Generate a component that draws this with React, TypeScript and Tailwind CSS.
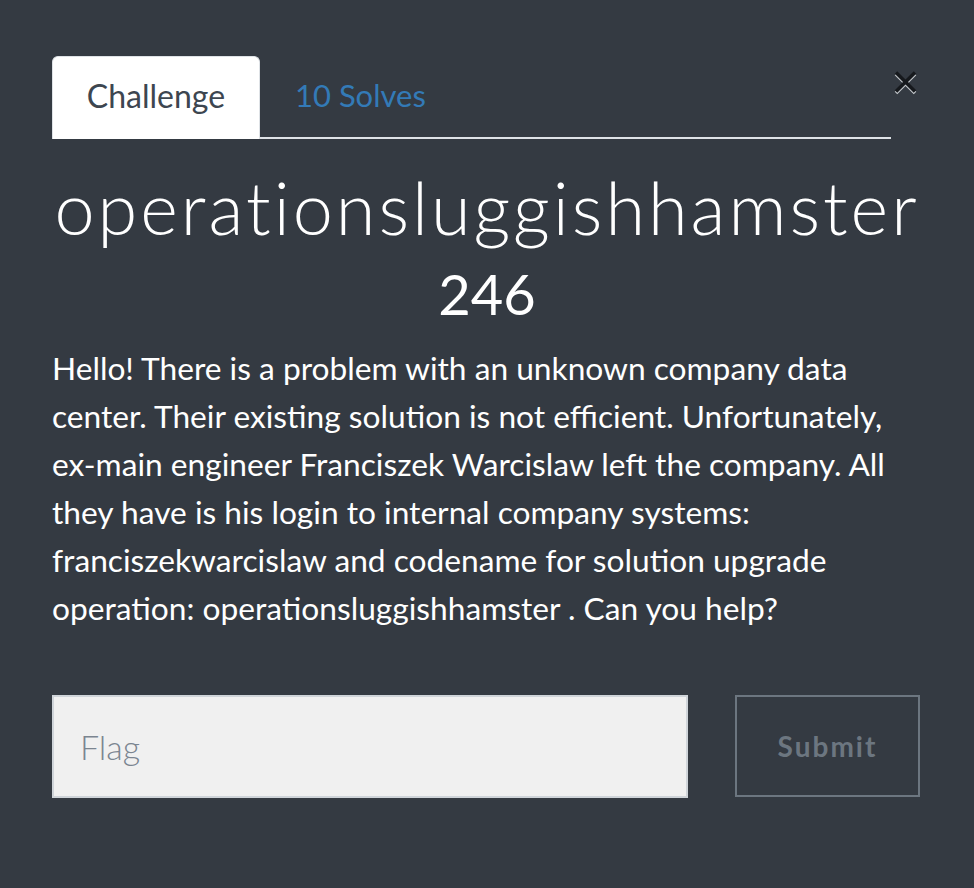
import { useState } from "react"

export default function App() {
  const [flag, setFlag] = useState("")

  return (
    <div className="min-h-[888px] w-full bg-[#343a42] font-['Lato','Open_Sans',sans-serif] text-white">
      <div className="relative px-[52px] pt-[54px]">
        <button className="absolute left-[893px] top-[70px] w-[25px] h-[25px]">
          <svg viewBox="0 0 25 25" width="25" height="25">
            <g strokeWidth="3.5" strokeLinecap="butt">
              <line x1="3" y1="4" x2="22" y2="23" stroke="#c8ccd0" />
              <line x1="22" y1="4" x2="3" y2="23" stroke="#c8ccd0" />
              <line x1="3" y1="2.5" x2="22" y2="21.5" stroke="#16191d" />
              <line x1="22" y1="2.5" x2="3" y2="21.5" stroke="#16191d" />
            </g>
          </svg>
        </button>

        <div className="flex items-end w-[839px] border-b-2 border-[#dee2e6]">
          <div className="h-[83px] w-[208px] -mb-[2px] flex items-center justify-center rounded-t-[6px] bg-white border border-[#dee2e6] border-b-0 text-[32px] text-[#3d4650] pb-[4px]">
            Challenge
          </div>
          <a href="#" className="h-[83px] px-[35px] flex items-center text-[31px] text-[#337ab7]">
            10 Solves
          </a>
        </div>

        <h1 className="mt-[20px] text-[72px] leading-[96px] font-light tracking-[3px] text-center whitespace-nowrap -mx-[10px]">
          operationsluggishhamster
        </h1>
        <h2 className="mt-[5px] text-center text-[56px] leading-[68px]">246</h2>

        <p className="mt-[16px] w-[839px] text-[31.7px] leading-[48px]">
          Hello! There is a problem with an unknown company data center. Their existing solution is not efficient. Unfortunately, ex-main engineer Franciszek Warcislaw left the company. All they have is his login to internal company systems: franciszekwarcislaw and codename for solution upgrade operation: operationsluggishhamster . Can you help?
        </p>

        <div className="mt-[63px] flex items-stretch">
          <input
            value={flag}
            onChange={(e) => setFlag(e.target.value)}
            placeholder="Flag"
            className="w-[636px] h-[103px] px-[26px] bg-[#f0f0f0] border-2 border-[#cfd4d9] text-[34px] font-light text-[#3d4650] placeholder:text-[#7b8590] outline-none"
          />
          <button className="ml-[47px] w-[185px] h-[102px] border-2 border-[#6c7680] text-[28px] font-bold tracking-[2px] text-[#6c7680]">
            Submit
          </button>
        </div>
      </div>
    </div>
  )
}
